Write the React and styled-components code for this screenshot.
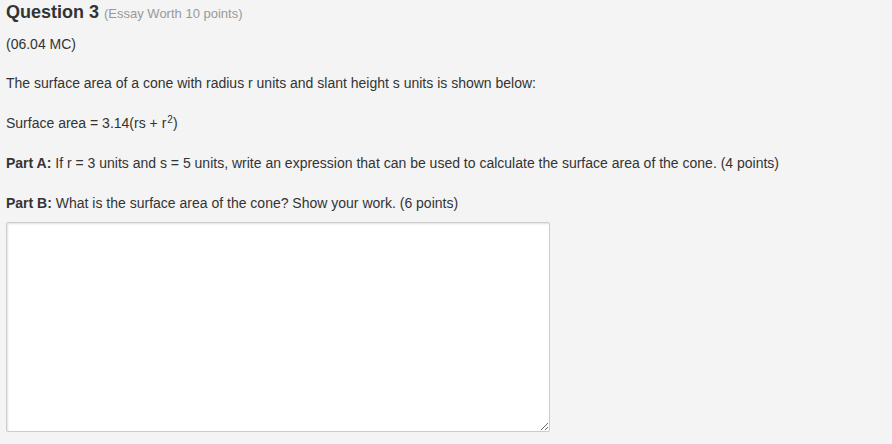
import React from "react"
import styled, { createGlobalStyle } from "styled-components"

const GlobalStyle = createGlobalStyle`
  body {
    margin: 0;
    background: #f4f4f4;
    font-family: "Liberation Sans", Arial, sans-serif;
    color: #333;
  }
`

const Page = styled.div`
  padding: 0 6px;
  display: flex;
  flex-direction: column;
`

const Title = styled.h2`
  margin: 0;
  font-size: 18px;
  line-height: 24px;
  font-weight: bold;
  color: #333;
`

const Worth = styled.span`
  font-size: 13px;
  font-weight: normal;
  color: #999;
`

const Text = styled.p`
  margin: ${(p) => p.$top ?? 20}px 0 0;
  font-size: 14px;
  line-height: 20px;
`

const Sup = styled.span`
  font-size: 10px;
  line-height: 0;
  vertical-align: 5px;
  margin-left: 1px;
`

const Answer = styled.textarea`
  margin: 9px 0 0;
  width: 544px;
  height: 210px;
  box-sizing: border-box;
  border: 1px solid #ccc;
  border-radius: 2px;
  box-shadow: inset 1px 1px 2px rgba(0, 0, 0, 0.12);
  background: #fff;
  resize: both;
  font-family: "Liberation Sans", Arial, sans-serif;
  font-size: 14px;
`

const App = () => (
  <Page>
    <GlobalStyle />
    <Title>
      Question 3 <Worth>(Essay Worth 10 points)</Worth>
    </Title>
    <Text $top={8}>(06.04 MC)</Text>
    <Text $top={19}>The surface area of a cone with radius r units and slant height s units is shown below:</Text>
    <Text>
      Surface area = 3.14(rs + r<Sup>2</Sup>)
    </Text>
    <Text>
      <b>Part A:</b> If r = 3 units and s = 5 units, write an expression that can be used to calculate the surface area of the cone. (4 points)
    </Text>
    <Text>
      <b>Part B:</b> What is the surface area of the cone? Show your work. (6 points)
    </Text>
    <Answer />
  </Page>
)

export default App
